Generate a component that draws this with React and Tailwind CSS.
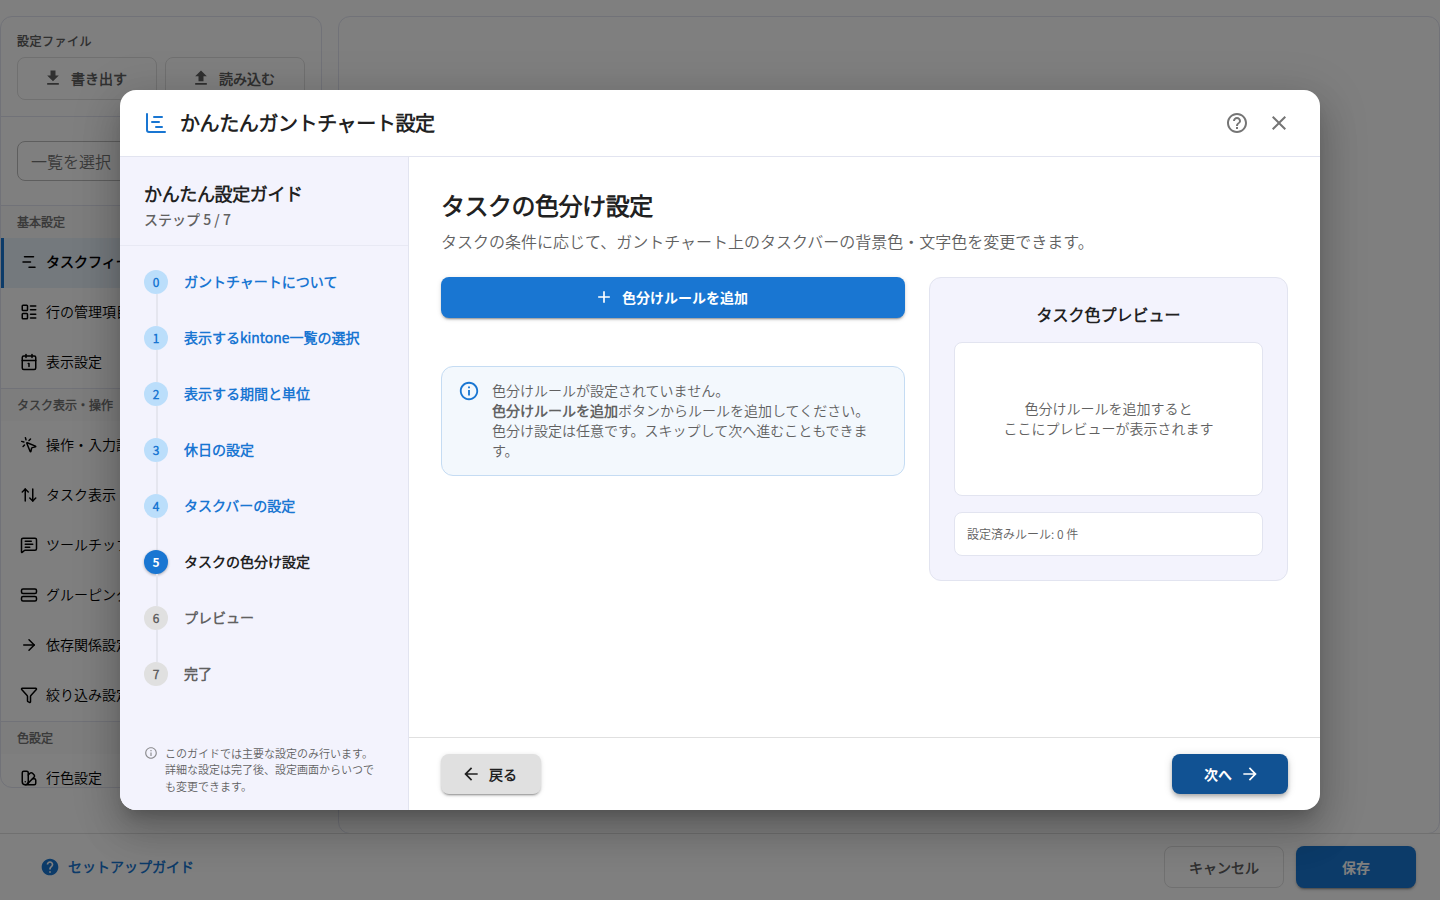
import {
    ChartGantt,
    ChartNoAxesGantt,
    LayoutList,
    Calendar1,
    MousePointerClick,
    ArrowUpDown,
    MessageSquareText,
    StretchHorizontal,
    ArrowRight,
    Funnel,
    SwatchBook,
} from 'lucide-react';
import {
    MdAdd,
    MdArrowBack,
    MdArrowForward,
    MdClose,
    MdHelp,
    MdHelpOutline,
    MdInfoOutline,
} from 'react-icons/md';

const menuGroups = [
    {
        title: '基本設定',
        items: [
            { label: 'タスクフィールド', icon: ChartNoAxesGantt, active: true },
            { label: '行の管理項目', icon: LayoutList },
            { label: '表示設定', icon: Calendar1 },
        ],
    },
    {
        title: 'タスク表示・操作',
        items: [
            { label: '操作・入力設定', icon: MousePointerClick },
            { label: 'タスク表示', icon: ArrowUpDown },
            { label: 'ツールチップ', icon: MessageSquareText },
            { label: 'グルーピング', icon: StretchHorizontal },
            { label: '依存関係設定', icon: ArrowRight },
            { label: '絞り込み設定', icon: Funnel },
        ],
    },
    {
        title: '色設定',
        items: [{ label: '行色設定', icon: SwatchBook }],
    },
];

const steps = [
    'ガントチャートについて',
    '表示するkintone一覧の選択',
    '表示する期間と単位',
    '休日の設定',
    'タスクバーの設定',
    'タスクの色分け設定',
    'プレビュー',
    '完了',
];

const CURRENT_STEP = 5;

const FileButton = ({ label, path }) => (
    <button className="flex h-[43px] flex-1 items-center justify-center gap-2 rounded-lg border border-[#e0e0e0] pr-1 pb-0.5 text-sm font-semibold text-[#616161]">
        <svg viewBox="0 0 24 24" className="h-5 w-5" fill="currentColor">
            <path d={path} />
        </svg>
        {label}
    </button>
);

const SettingsMenu = () => (
    <aside className="flex h-[772px] w-[322px] shrink-0 flex-col overflow-hidden rounded-xl border border-[#e2e4f0] bg-white">
        <div className="h-[100px] shrink-0 border-b border-[#e2e4f0] px-4 pt-[15px]">
            <p className="text-xs leading-[18px] font-semibold tracking-[0.04em] text-[#616161]">設定ファイル</p>
            <div className="mt-[7px] flex gap-2">
                <FileButton label="書き出す" path="M5 20h14v-2H5v2zM19 9h-4V3H9v6H5l7 7 7-7z" />
                <FileButton label="読み込む" path="M5 20h14v-2H5v2zM5 10h4v6h6v-6h4l-7-7-7 7z" />
            </div>
        </div>
        <div className="h-[88px] shrink-0 px-4 pt-6">
            <div className="flex h-10 items-center rounded-lg border border-[#bdbdbd] px-[13px] text-base text-[#757575]">
                一覧を選択
            </div>
        </div>
        {menuGroups.map((group) => (
            <div key={group.title} className="shrink-0">
                <p className="h-[33px] border-t border-[#e2e4f0] bg-[#fafafa] px-4 pt-[7px] text-xs leading-[18px] font-semibold text-[#757575]">
                    {group.title}
                </p>
                {group.items.map(({ label, icon: Icon, active }) => (
                    <div
                        key={label}
                        className={`flex h-[50px] items-center gap-2 pr-4 pb-0.5 text-sm text-black ${active
                            ? 'border-l-3 border-[#1976d2] bg-[#e8f2fb] pl-4 font-semibold'
                            : 'pl-[19px]'
                            }`}
                    >
                        <Icon className="h-[18px] w-[18px]" />
                        <span className="pb-0.5">{label}</span>
                    </div>
                ))}
            </div>
        ))}
    </aside>
);

const SettingsPage = () => (
    <div className="flex h-full flex-col bg-white">
        <div className="flex min-h-0 flex-1 gap-4 pt-4">
            <SettingsMenu />
            <div className="h-[818px] flex-1 rounded-xl border border-[#e2e4f0]" />
        </div>
        <footer className="z-10 flex h-[67px] shrink-0 items-center justify-between border-t border-[#e0e0e0] bg-white pr-6 pl-10">
            <div className="flex items-center gap-2 text-sm font-semibold text-[#1976d2]">
                <MdHelp className="h-5 w-5" />
                <span className="pb-0.5">セットアップガイド</span>
            </div>
            <div className="flex gap-3 text-sm">
                <button className="h-[42px] w-[120px] rounded-lg border border-[#e0e0e0] font-semibold text-[#616161]">
                    キャンセル
                </button>
                <button className="h-[42px] w-[120px] rounded-lg bg-[#1976d2] font-['Noto_Sans_CJK_JP',sans-serif] font-bold text-white shadow-[0_3px_1px_-2px_rgba(0,0,0,0.2),0_2px_2px_0_rgba(0,0,0,0.14),0_1px_5px_0_rgba(0,0,0,0.12)]">
                    保存
                </button>
            </div>
        </footer>
    </div>
);

const StepItem = ({ index, label }) => {
    const done = index < CURRENT_STEP;
    const current = index === CURRENT_STEP;
    const last = index === steps.length - 1;

    return (
        <li className={`flex gap-4 ${last ? 'h-6' : 'h-14'}`}>
            <div className="flex w-6 flex-col items-center">
                <span
                    className={`flex h-6 w-6 shrink-0 items-center justify-center rounded-full text-xs font-bold ${current
                        ? "bg-[#1976d2] font-['Noto_Sans_CJK_JP',sans-serif] text-white shadow-[0_1px_3px_rgba(0,0,0,0.3)]"
                        : done
                            ? 'bg-[#bbdefb] text-[#1976d2]'
                            : 'bg-[#e0e0e0] text-[#616161]'
                        }`}
                >
                    {index}
                </span>
                {!last && <span className="ml-0.5 w-0.5 flex-1 bg-[#e5e6ef]" />}
            </div>
            <span
                className={`-mt-px text-sm leading-6 font-semibold ${current ? 'text-[#212121]' : done ? 'text-[#1976d2]' : 'text-[#616161]'
                    }`}
            >
                {label}
            </span>
        </li>
    );
};

const GuideSidebar = () => (
    <aside className="flex w-[289px] shrink-0 flex-col border-r border-[#e2e4f0] bg-[#f3f3fd]">
        <div className="h-[89px] border-b border-[#e8e9f4] px-6 pt-[23px]">
            <h2 className="text-lg leading-[27px] font-bold tracking-[-0.02em] text-[#212121]">かんたん設定ガイド</h2>
            <p className="font-['Noto_Sans_CJK_JP',sans-serif] text-sm leading-[24px] font-medium text-[#616161]">
                ステップ {CURRENT_STEP} / 7
            </p>
        </div>
        <ol className="flex-1 px-6 pt-6">
            {steps.map((label, index) => (
                <StepItem key={label} index={index} label={label} />
            ))}
        </ol>
        <div className="flex gap-[7px] pr-8 pb-4 pl-6 text-[11px] leading-[16.5px] text-[#616161]">
            <MdInfoOutline className="mt-px h-3.5 w-3.5 shrink-0 opacity-70" />
            <p>このガイドでは主要な設定のみ行います。詳細な設定は完了後、設定画面からいつでも変更できます。</p>
        </div>
    </aside>
);

const ColorPreview = () => (
    <section className="h-[304px] w-[359px] shrink-0 rounded-xl border border-[#e2e4f0] bg-[#f3f3fd] p-6">
        <h3 className="text-center text-base leading-6 font-bold text-[#212121]">タスク色プレビュー</h3>
        <div className="mt-4 flex h-[154px] items-center justify-center rounded-lg border border-[#e2e4f0] bg-white pb-0.5 text-center text-sm leading-5 text-[#616161]">
            <p>
                色分けルールを追加すると
                <br />
                ここにプレビューが表示されます
            </p>
        </div>
        <div className="mt-4 flex h-11 items-center rounded-lg border border-[#e2e4f0] bg-white px-3 text-xs text-[#616161]">
            設定済みルール: 0 件
        </div>
    </section>
);

const GuideDialog = () => (
    <div
        role="dialog"
        className="flex h-[720px] w-[1200px] flex-col overflow-hidden rounded-2xl bg-white shadow-[0_11px_15px_-7px_rgba(0,0,0,0.2),0_24px_38px_3px_rgba(0,0,0,0.14),0_9px_46px_8px_rgba(0,0,0,0.12)]"
    >
        <header className="flex h-[67px] shrink-0 items-center border-b border-[#e2e4f0] px-6">
            <ChartGantt className="h-6 w-6 text-[#1976d2]" />
            <h1 className="ml-3 flex-1 text-xl font-bold tracking-[-0.02em] text-[#212121]">かんたんガントチャート設定</h1>
            <div className="flex gap-[18px] pr-[5px] text-[#757575]">
                <MdHelpOutline className="h-6 w-6" />
                <MdClose className="h-6 w-6" />
            </div>
        </header>
        <div className="flex min-h-0 flex-1">
            <GuideSidebar />
            <div className="flex min-w-0 flex-1 flex-col">
                <main className="flex-1 px-8 pt-[30px]">
                    <h2 className="text-2xl leading-9 font-bold tracking-[-0.02em] text-[#212121]">タスクの色分け設定</h2>
                    <p className="mt-1 text-base leading-7 text-[#616161]">
                        タスクの条件に応じて、ガントチャート上のタスクバーの背景色・文字色を変更できます。
                    </p>
                    <div className="mt-[22px] flex gap-6">
                        <div className="min-w-0 flex-1">
                            <button className="flex h-[41px] w-full items-center justify-center gap-2 rounded-lg bg-[#1976d2] pr-1 pb-px font-['Noto_Sans_CJK_JP',sans-serif] text-sm font-bold text-white shadow-[0_3px_1px_-2px_rgba(0,0,0,0.2),0_2px_2px_0_rgba(0,0,0,0.14),0_1px_5px_0_rgba(0,0,0,0.12)]">
                                <MdAdd className="h-5 w-5" />
                                色分けルールを追加
                            </button>
                            <div className="mt-12 flex h-[110px] gap-3 rounded-xl border border-[#c5dcf3] bg-[#f3f8fd] px-4 py-[13px] text-sm leading-5 text-[#616161]">
                                <MdInfoOutline className="h-[22px] w-[22px] shrink-0 text-[#1976d2]" />
                                <p className="pr-3">
                                    色分けルールが設定されていません。
                                    <br />
                                    <strong className="font-bold">色分けルールを追加</strong>ボタンからルールを追加してください。
                                    <br />
                                    色分け設定は任意です。スキップして次へ進むこともできます。
                                </p>
                            </div>
                        </div>
                        <ColorPreview />
                    </div>
                </main>
                <footer className="flex h-[73px] shrink-0 items-center justify-between border-t border-[#e0e0e0] px-8 text-sm">
                    <button className="flex h-10 w-[100px] items-center justify-center gap-2 rounded-lg bg-[#e0e0e0] pr-1 font-bold text-[#212121] shadow-[0_3px_1px_-2px_rgba(0,0,0,0.2),0_2px_2px_0_rgba(0,0,0,0.14),0_1px_5px_0_rgba(0,0,0,0.12)]">
                        <MdArrowBack className="h-5 w-5" />
                        戻る
                    </button>
                    <button className="flex h-10 w-[116px] items-center justify-center gap-2 rounded-lg bg-[#115293] pl-1 font-['Noto_Sans_CJK_JP',sans-serif] font-bold text-white shadow-[0_2px_4px_-1px_rgba(0,0,0,0.2),0_4px_5px_0_rgba(0,0,0,0.14),0_1px_10px_0_rgba(0,0,0,0.12)]">
                        次へ
                        <MdArrowForward className="h-5 w-5" />
                    </button>
                </footer>
            </div>
        </div>
    </div>
);

export default function App() {
    return (
        <div className="relative h-[900px] w-[1440px] overflow-hidden font-['Noto_Sans_CJK_JP_DemiLight','Noto_Sans_CJK_JP',sans-serif]">
            <SettingsPage />
            <div className="absolute inset-0 z-20 flex items-center justify-center bg-black/50">
                <GuideDialog />
            </div>
        </div>
    );
}
